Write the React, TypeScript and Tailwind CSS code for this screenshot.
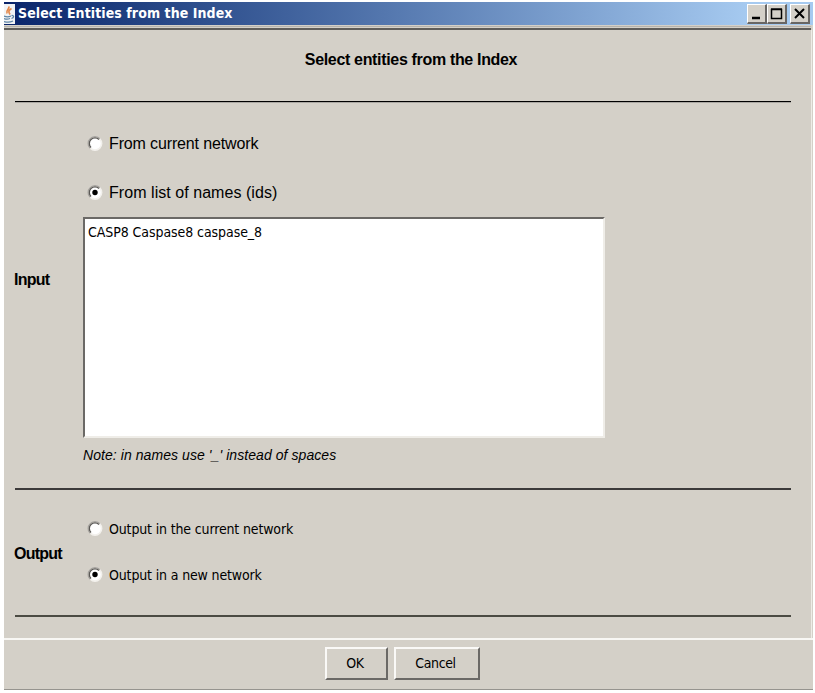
import React from "react";

function JavaIcon() {
  return (
    <svg width="11" height="20" viewBox="0 0 11 20" className="shrink-0">
      <rect width="11" height="20" fill="#f2f3f4" />
      <path d="M4.5 2.5C6.5 4.5 1.5 6 3 9.5M7.5 4.5C4 6.5 4.5 8 6 10.5" stroke="#e58a4c" strokeWidth="1.7" fill="none" />
      <path d="M0 12c2 1 5 1 7 0M0 14.5c2 .8 4 .8 6 0M0 17.5c3 1 6 1 9-.5M7.5 11.5c3-.5 2.5 2.5 0 3" stroke="#5d84a5" strokeWidth="1.2" fill="none" />
    </svg>
  );
}

function Radio({ checked = false }: { checked?: boolean }) {
  return (
    <svg width="16" height="18" viewBox="0 0 16 18" className="shrink-0">
      <circle cx="8" cy="8.5" r="7.4" fill="#f3f1ed" />
      <circle cx="8" cy="8.5" r="5.7" fill="#fff" />
      <path d="M3.1 13.4A6.9 6.9 0 0 1 12.9 3.6" fill="none" stroke="#a5a29d" strokeWidth="1.3" />
      <path d="M4 12.5A5.6 5.6 0 0 1 12 4.5" fill="none" stroke="#5a5855" strokeWidth="1.3" />
      {checked && <circle cx="8" cy="8.5" r="2.7" fill="#000" />}
    </svg>
  );
}

function CaptionButton({ children }: { children: React.ReactNode }) {
  return (
    <button className="flex h-[20px] w-[20px] items-center justify-center border-t border-r-2 border-b-2 border-l border-t-white border-r-[#686664] border-b-[#686664] border-l-white bg-[#d4d0c8]">
      <svg width="15" height="15" viewBox="0 0 15 15" className="shrink-0" fill="none" stroke="#000">{children}</svg>
    </button>
  );
}

function PushButton({ className, children }: { className: string; children: React.ReactNode }) {
  return (
    <button className={`h-[33px] border-t-2 border-r-2 border-b-2 border-l-2 border-t-[#faf9f7] border-r-[#6b6966] border-b-[#6b6966] border-l-[#faf9f7] bg-[#d4d0c8] pr-[3px] pb-[1px] font-['DejaVu_Sans_Condensed','DejaVu_Sans',sans-serif] text-[14px] leading-[18px] tracking-[-0.4px] ${className}`}>
      {children}
    </button>
  );
}

const arial = "font-['Liberation_Sans',Arial,sans-serif]";
const tahoma = "font-['DejaVu_Sans_Condensed','DejaVu_Sans',sans-serif]";

export default function App() {
  return (
    <div className="h-[693px] w-[815px] overflow-hidden bg-white pt-[2px] pl-[4px] text-black">
      <div className="flex h-[688px] w-[809px] flex-col border-b border-[#96948f] bg-[#d4d0c8]">
        <header className="flex h-[23px] shrink-0 items-center bg-linear-to-r from-[#0a246a] to-[#a6caf0] to-92%">
          <JavaIcon />
          <h1 className={`ml-[3px] flex-1 pb-[1px] text-[14px] leading-[20px] font-bold tracking-[0.08px] whitespace-nowrap text-white ${tahoma}`}>Select Entities from the Index</h1>
          <div className="mr-[3px] flex">
            <CaptionButton><path d="M3 12h8" strokeWidth="2.5" /></CaptionButton>
            <CaptionButton><path d="M2.5 3.5h10v9h-10zM2 3h11" strokeWidth="1.5" /></CaptionButton>
            <span className="w-[3px]" />
            <CaptionButton><path d="M3 3l9 9M12 3l-9 9" strokeWidth="2" /></CaptionButton>
          </div>
        </header>
        <div className="mr-[2px] h-[5px] shrink-0 border-b-2 border-[#5f5d5a] bg-[#d4d0c8] pt-[1px]"><div className="h-px bg-[#b5b2ac]" /></div>
        <main className="mr-px flex h-[608px] shrink-0 flex-col border-r border-[#eeece7] pr-[20px] pl-[11px]">
          <h2 className={`mt-[20px] h-[20px] pl-[16px] text-center text-[16px] leading-[20px] font-bold tracking-[-0.33px] whitespace-nowrap ${arial}`}>Select entities from the Index</h2>
          <hr className="mt-[31px] h-[2px] shrink-0 border-0 border-t border-black bg-[#aaa7a2]" />
          <section className="flex h-[385px] shrink-0">
            <h3 className={`mt-[167px] ml-[-1px] w-[69px] text-[16px] leading-[20px] font-bold tracking-[-0.75px] ${arial}`}>Input</h3>
            <div className="pt-[31px]">
              <label className={`ml-[4px] flex h-[20px] items-center gap-[6px] text-[16px] tracking-[-0.14px] ${arial}`}><Radio />From current network</label>
              <label className={`mt-[29px] ml-[4px] flex h-[20px] items-center gap-[6px] text-[16px] tracking-[0.05px] ${arial}`}><Radio checked />From list of names (ids)</label>
              <div className={`mt-[14px] h-[221px] w-[522px] border-2 border-t-[#6b6966] border-r-[#efede8] border-b-[#efede8] border-l-[#6b6966] bg-white px-[3px] pt-[3px] text-[14px] leading-[20px] tracking-[-0.07px] ${tahoma}`}>CASP8 Caspase8 caspase_8</div>
              <p className={`mt-[7px] text-[14px] leading-[20px] tracking-[0.07px] italic ${arial}`}>Note: in names use '_' instead of spaces</p>
            </div>
          </section>
          <hr className="h-[2px] shrink-0 border-0 bg-[#3c3a3a]" />
          <section className="flex h-[125px] shrink-0">
            <h3 className={`mt-[54px] ml-[-1px] w-[69px] text-[16px] leading-[20px] font-bold tracking-[-0.75px] ${arial}`}>Output</h3>
            <div className={`pt-[29px] pl-[4px] text-[14px] tracking-[-0.15px] ${tahoma}`}>
              <label className="flex h-[20px] items-center gap-[6px]"><Radio />Output in the current network</label>
              <label className="mt-[26px] flex h-[20px] items-center gap-[6px]"><Radio checked />Output in a new network</label>
            </div>
          </section>
          <hr className="h-[2px] shrink-0 border-0 bg-[#4b4b43]" />
        </main>
        <footer className="flex flex-1 justify-center gap-[6px] border-t-2 border-[#f8f7f4] pt-[7px] pr-[12px]">
          <PushButton className="w-[63px]">OK</PushButton>
          <PushButton className="w-[86px]">Cancel</PushButton>
        </footer>
      </div>
    </div>
  );
}
